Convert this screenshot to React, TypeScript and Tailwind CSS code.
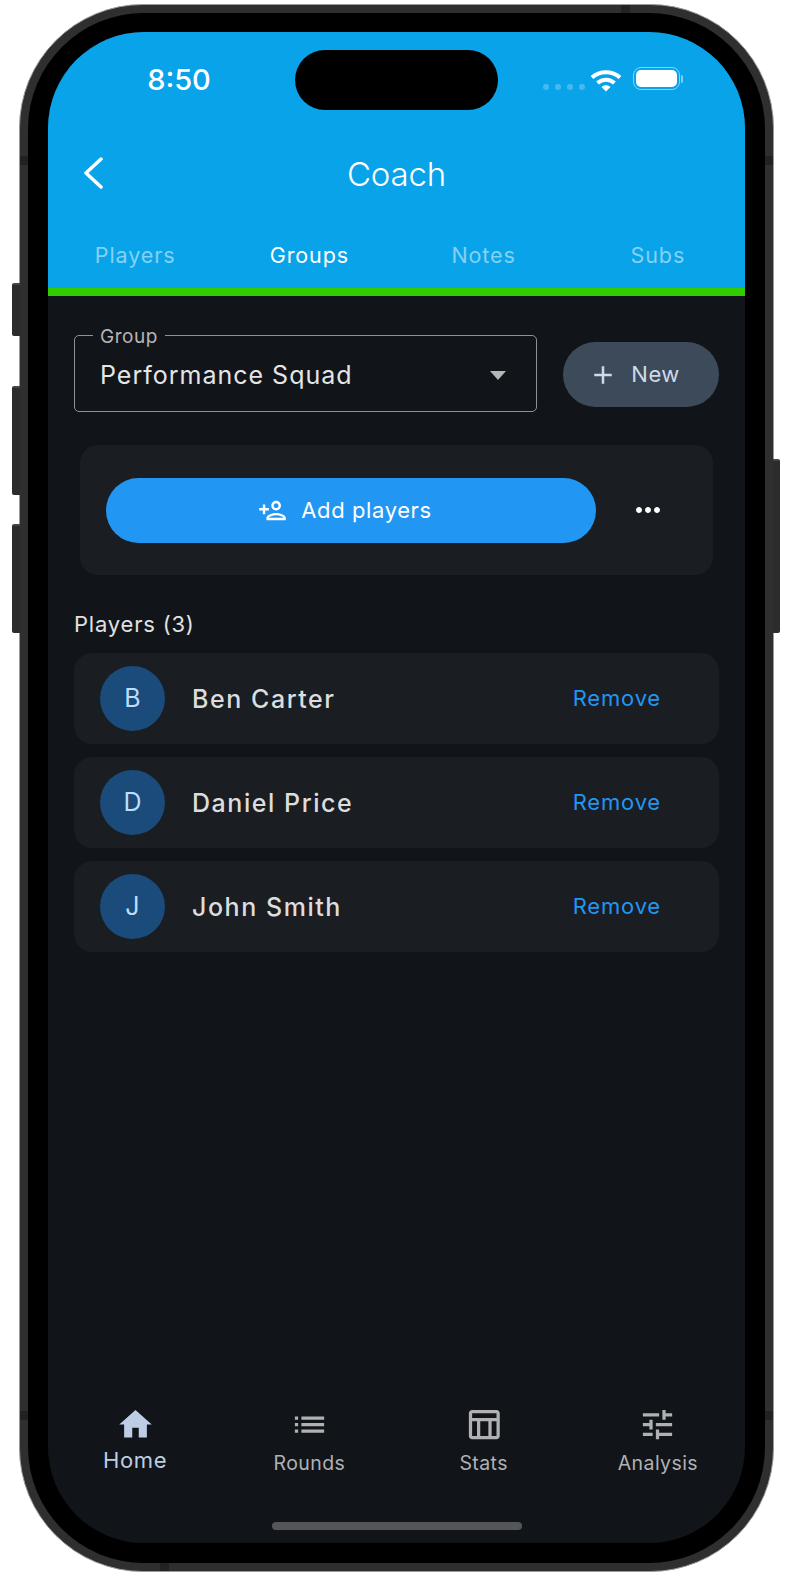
import { MdAdd, MdHome, MdList, MdMoreHoriz, MdOutlinePersonAdd, MdOutlineTableChart, MdTune } from 'react-icons/md'

const tabs = [
  { label: 'Players', active: false },
  { label: 'Groups', active: true },
  { label: 'Notes', active: false },
  { label: 'Subs', active: false },
]

const players = ['Ben Carter', 'Daniel Price', 'John Smith']

function WifiIcon() {
  return (
    <svg width="32" height="25" viewBox="0 0 32 25" fill="none" stroke="white" strokeWidth="4">
      <path d="M2 9.5C9.5 2.5 22.5 2.5 30 9.5" />
      <path d="M7.5 15C12.5 10.5 19.5 10.5 24.5 15" />
      <path d="M11.5 19L16 23.5L20.5 19C18 16.6 14 16.6 11.5 19Z" fill="white" stroke="none" />
    </svg>
  )
}

function Battery() {
  return (
    <div className="flex items-center gap-[1px]">
      <div className="w-[47px] h-[23px] rounded-[8px] border border-white/50 p-[2px]">
        <div className="w-full h-full rounded-[5px] bg-white" />
      </div>
      <div className="w-[2px] h-[8px] rounded-r-full bg-white/50" />
    </div>
  )
}

export default function App() {
  return (
    <div className="w-[792px] h-[1576px] bg-white pl-[19px] pt-[4px] font-['Inter',sans-serif]">
      <div className="relative w-[755px] h-[1568px] rounded-[124px] border border-[#9a9a9a] bg-[#2f2f2f] p-[8px]">
        {/* side buttons */}
        <div className="absolute left-[-8px] top-[278px] w-[8px] h-[53px] rounded-l-[2px] bg-[#2c2c2c] border-t-2 border-[#444]" />
        <div className="absolute left-[-8px] top-[381px] w-[8px] h-[109px] rounded-l-[2px] bg-[#2c2c2c] border-t-2 border-[#444]" />
        <div className="absolute left-[-8px] top-[519px] w-[8px] h-[109px] rounded-l-[2px] bg-[#2c2c2c] border-t-2 border-[#444]" />
        <div className="absolute right-[-7px] top-[454px] w-[7px] h-[174px] rounded-r-[2px] bg-[#2c2c2c] border-t-2 border-[#444]" />
        {/* antenna bands */}
        <div className="absolute left-0 top-[151px] w-[8px] h-[9px] bg-[#222]" />
        <div className="absolute right-0 top-[151px] w-[8px] h-[9px] bg-[#222]" />
        <div className="absolute left-0 top-[1406px] w-[8px] h-[9px] bg-[#222]" />
        <div className="absolute right-0 top-[1406px] w-[8px] h-[9px] bg-[#222]" />
        <div className="absolute left-[601px] top-0 w-[9px] h-[8px] bg-[#222]" />
        <div className="absolute left-[140px] bottom-0 w-[9px] h-[8px] bg-[#222]" />

        <div className="w-full h-full rounded-[116px] bg-black px-[20px] py-[19px]">
          <div className="flex flex-col h-[1511px] rounded-[96px] overflow-hidden bg-[#111418]">
            <header className="h-[256px] bg-[#09a3e9] text-white flex flex-col shrink-0">
              <div className="flex pt-[18px] h-[78px]">
                <div className="w-[247px] flex justify-center pl-[15px] pt-[13px]">
                  <span className="text-[29px] leading-[34px] font-medium">8:50</span>
                </div>
                <div className="w-[203px] h-[60px] rounded-full bg-black" />
                <div className="flex-1 flex pl-[45px] pt-[17px]">
                  <div className="flex gap-[6px] pt-[17px] h-fit">
                    <span className="w-[6px] h-[6px] rounded-full bg-white/25" />
                    <span className="w-[6px] h-[6px] rounded-full bg-white/25" />
                    <span className="w-[6px] h-[6px] rounded-full bg-white/25" />
                    <span className="w-[6px] h-[6px] rounded-full bg-white/25" />
                  </div>
                  <div className="ml-[5px] mt-[1px]">
                    <WifiIcon />
                  </div>
                  <div className="ml-[11px]">
                    <Battery />
                  </div>
                </div>
              </div>
              <div className="grid grid-cols-3 items-center px-[35px] mt-[38px] h-[50px]">
                <svg width="20" height="32" viewBox="0 0 20 32" fill="none" stroke="white" strokeWidth="3.5" strokeLinecap="round" strokeLinejoin="round">
                  <path d="M18 2L3 16L18 30" />
                </svg>
                <h1 className="text-[33px] text-center leading-[40px] tracking-[-0.2px] pt-[2px] font-[350]">Coach</h1>
              </div>
              <div className="grid grid-cols-4 text-center text-[21.5px] leading-[28px] mt-[43px]">
                {tabs.map((tab) => (
                  <div key={tab.label} className={tab.active ? 'text-white tracking-[0.9px]' : 'text-white/50 tracking-[0.9px]'}>
                    {tab.label}
                  </div>
                ))}
              </div>
            </header>
            <div className="h-[8px] bg-[#33cc00] shrink-0" />

            <main className="flex-1 px-[26px] pt-[37px]">
              <div className="flex items-center gap-[26px]">
                <fieldset className="w-[464px] h-[87px] mt-[-8px] rounded-[5px] border border-[#8f9194] px-[25px]">
                  <legend className="px-[7px] ml-[-7px] text-[19px] leading-[20px] tracking-[0.5px] text-[#b4b6b8]">
                    <span className="relative top-[2px]">Group</span>
                  </legend>
                  <div className="flex items-center justify-between pt-[13px]">
                    <span className="text-[25px] leading-[34px] tracking-[1px] text-[#e4e5e6]">Performance Squad</span>
                    <span className="mr-[5px] border-x-[8px] border-t-[9px] border-x-transparent border-t-[#b4b6b8]" />
                  </div>
                </fieldset>
                <button className="w-[156px] h-[65px] mt-[4px] pr-[14px] rounded-full bg-[#3d4a5a] flex items-center justify-center gap-[13px] text-[#cfd9e8] text-[22px] tracking-[0.5px]">
                  <MdAdd size={30} />
                  New
                </button>
              </div>

              <section className="mx-[6px] mt-[33px] h-[130px] rounded-[18px] bg-[#1a1d21] flex items-center pl-[26px]">
                <button className="w-[490px] h-[65px] pr-[12px] rounded-full bg-[#2196f3] flex items-center justify-center gap-[14px] text-white text-[22px] tracking-[0.6px]">
                  <MdOutlinePersonAdd size={29} />
                  Add players
                </button>
                <MdMoreHoriz size={36} className="ml-[34px] text-white" />
              </section>

              <h2 className="mt-[36px] text-[22px] leading-[26px] tracking-[0.8px] text-[#e0e1e2]">Players (3)</h2>
              <ul className="mt-[16px] flex flex-col gap-[13px]">
                {players.map((name) => (
                  <li key={name} className="h-[91px] rounded-[18px] bg-[#1a1d21] flex items-center pl-[26px] pr-[58px]">
                    <div className="w-[65px] h-[65px] rounded-full bg-[#1b4b7a] flex items-center justify-center text-[25px] text-[#bbdefb]">
                      {name[0]}
                    </div>
                    <span className="ml-[27px] pt-[2px] flex-1 text-[25px] tracking-[1.55px] font-medium text-[#dcdddf]">{name}</span>
                    <span className="text-[22px] tracking-[0.8px] text-[#2196f3]">Remove</span>
                  </li>
                ))}
              </ul>
            </main>

            <nav className="grid grid-cols-4 shrink-0 text-[#b0b1b3] text-[19.5px] leading-[24px] tracking-[0.4px] text-center">
              <div className="flex flex-col items-center text-[#bccde4]">
                <MdHome size={39} />
                <span className="mt-[2px] text-[22px] leading-[28px] tracking-[0.6px]">Home</span>
              </div>
              <div className="flex flex-col items-center">
                <MdList size={39} />
                <span className="mt-[7px]">Rounds</span>
              </div>
              <div className="flex flex-col items-center">
                <MdOutlineTableChart size={39} />
                <span className="mt-[7px]">Stats</span>
              </div>
              <div className="flex flex-col items-center">
                <MdTune size={39} />
                <span className="mt-[7px]">Analysis</span>
              </div>
            </nav>
            <div className="h-[8px] w-[250px] mx-auto mt-[47px] mb-[13px] rounded-full bg-[#555658] shrink-0" />
          </div>
        </div>
      </div>
    </div>
  )
}
